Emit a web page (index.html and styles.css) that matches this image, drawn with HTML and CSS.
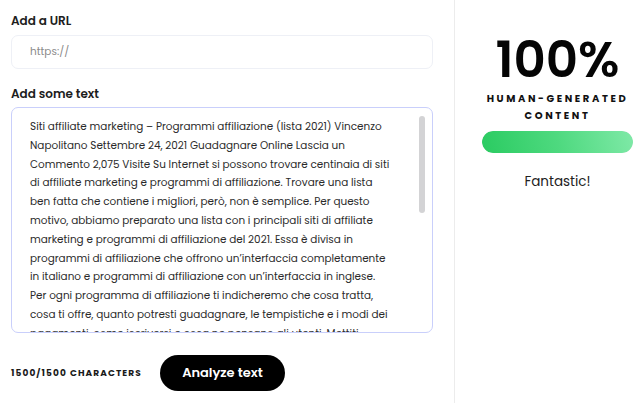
FILE: index.html
```html
<!DOCTYPE html>
<html lang="it">
<head>
    <meta charset="UTF-8" />
    <title>Content detector</title>
    <link rel="stylesheet" href="styles.css">
</head>
<body>
    <div class="page">
        <div class="editor">
            <label class="field-label" for="urlInput">Add a URL</label>
            <input id="urlInput" class="url-input" type="text" placeholder="https://" autocomplete="off" />

            <label class="field-label text-label" for="textInput">Add some text</label>
            <div class="text-wrap">
                <textarea id="textInput" class="text-input" spellcheck="false">Siti affiliate marketing – Programmi affiliazione (lista 2021) Vincenzo
Napolitano Settembre 24, 2021 Guadagnare Online Lascia un
Commento 2,075 Visite Su Internet si possono trovare centinaia di siti
di affiliate marketing e programmi di affiliazione. Trovare una lista
ben fatta che contiene i migliori, però, non è semplice. Per questo
motivo, abbiamo preparato una lista con i principali siti di affiliate
marketing e programmi di affiliazione del 2021. Essa è divisa in
programmi di affiliazione che offrono un’interfaccia completamente
in italiano e programmi di affiliazione con un’interfaccia in inglese.
Per ogni programma di affiliazione ti indicheremo che cosa tratta,
cosa ti offre, quanto potresti guadagnare, le tempistiche e i modi dei
pagamenti, come iscriversi e cosa ne pensano gli utenti. Mettiti
comodo e scopri quali sono i migliori programmi di affiliazione per
guadagnare online con il tuo sito o blog.</textarea>
                <!-- scrollbar thumb, headless hides the native one -->
                <div class="scroll-thumb"></div>
            </div>

            <div class="actions">
                <span class="char-count">1500/1500 Characters</span>
                <button class="analyze-btn">Analyze text</button>
            </div>
        </div>

        <div class="result">
            <div class="score">100%</div>
            <div class="score-caption">Human-generated<br>content</div>
            <div class="meter"><div class="meter-fill" style="width: 100%"></div></div>
            <div class="verdict">Fantastic!</div>
        </div>
    </div>
</body>
</html>
```

FILE: styles.css
```css
html, body {
    margin: 0;
    padding: 0;
    height: 100%;
    background: #fff;
    font-family: 'Poppins', 'Open Sans', sans-serif;
    color: #222;
}

.page {
    display: flex;
    height: 100%;
}

.editor {
    width: 455px;
    box-sizing: border-box;
    padding: 12px 21px 0 11px;
    border-right: 1px solid #ececec;
    display: flex;
    flex-direction: column;
}

.field-label {
    font-size: 12px;
    font-weight: 600;
    line-height: 18px;
    color: #1d1d1d;
}

.url-input {
    margin-top: 5px;
    height: 34px;
    padding: 0 18px;
    font-family: inherit;
    font-size: 10.5px;
    color: #333;
    border: 1px solid #eef0f6;
    border-radius: 7px;
    box-sizing: border-box;
    outline: none;
}

.url-input::placeholder {
    color: #8a8a8a;
}

.text-label {
    margin-top: 16px;
}

.text-wrap {
    position: relative;
    margin-top: 4px;
    display: flex;
}

.text-input {
    flex: 1;
    height: 226px;
    padding: 10px 20px 4px 18px;
    font-family: inherit;
    font-size: 10.45px;
    line-height: 18.8px;
    color: #2b2b2b;
    border: 1px solid #c9cffb;
    border-radius: 7px;
    box-sizing: border-box;
    resize: none;
    white-space: pre;
    overflow: hidden;
    outline: none;
}

.scroll-thumb {
    position: absolute;
    top: 9px;
    right: 8px;
    width: 6px;
    height: 97px;
    border-radius: 3px;
    background: #d3d3d5;
}

.actions {
    display: flex;
    align-items: center;
    margin-top: 22px;
}

.char-count {
    font-size: 9px;
    font-weight: 700;
    letter-spacing: 1.1px;
    text-transform: uppercase;
    color: #1a1a1a;
    width: 149px;
}

.analyze-btn {
    width: 125px;
    height: 36px;
    background: #000;
    color: #fff;
    font-family: inherit;
    font-size: 13px;
    font-weight: 600;
    border: none;
    border-radius: 18px;
    cursor: pointer;
}

.result {
    flex: 1;
    display: flex;
    flex-direction: column;
    align-items: center;
    padding: 35px 8px 0 26px;
}

.score {
    font-size: 50px;
    font-weight: 600;
    line-height: 50px;
    color: #050505;
}

.score-caption {
    margin-top: 5px;
    font-size: 10px;
    font-weight: 700;
    line-height: 17px;
    letter-spacing: 2.6px;
    text-transform: uppercase;
    text-align: center;
    color: #111;
}

.meter {
    margin-top: 7px;
    width: 151px;
    height: 22px;
    border-radius: 11px;
    background: #e6e6e6;
    overflow: hidden;
}

.meter-fill {
    height: 100%;
    border-radius: 11px;
    background: linear-gradient(75deg, #2acb61 0%, #4ed97f 50%, #7fe9a7 100%);
}

.verdict {
    margin-top: 19px;
    font-size: 13.5px;
    color: #222;
}
```
